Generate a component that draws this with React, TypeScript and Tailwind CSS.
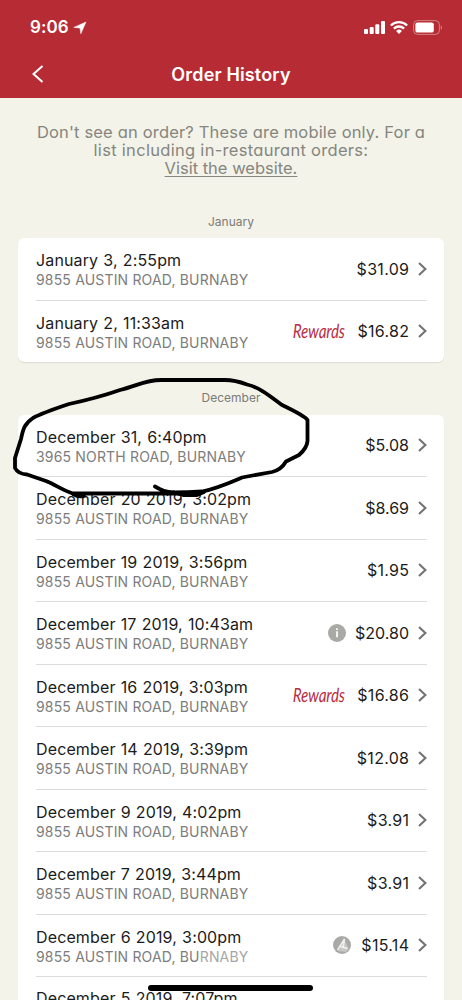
import type { ReactNode } from "react";
import clsx from "clsx";

interface Order {
  date: string;
  address: ReactNode;
  price: string;
  badge?: "rewards" | "info" | "faded";
}

const AUSTIN = "9855 AUSTIN ROAD, BURNABY";

const january: Order[] = [
  { date: "January 3, 2:55pm", address: AUSTIN, price: "$31.09" },
  {
    date: "January 2, 11:33am",
    address: AUSTIN,
    price: "$16.82",
    badge: "rewards",
  },
];

const december: Order[] = [
  {
    date: "December 31, 6:40pm",
    address: "3965 NORTH ROAD, BURNABY",
    price: "$5.08",
  },
  { date: "December 20 2019, 3:02pm", address: AUSTIN, price: "$8.69" },
  { date: "December 19 2019, 3:56pm", address: AUSTIN, price: "$1.95" },
  {
    date: "December 17 2019, 10:43am",
    address: AUSTIN,
    price: "$20.80",
    badge: "info",
  },
  {
    date: "December 16 2019, 3:03pm",
    address: AUSTIN,
    price: "$16.86",
    badge: "rewards",
  },
  { date: "December 14 2019, 3:39pm", address: AUSTIN, price: "$12.08" },
  { date: "December 9 2019, 4:02pm", address: AUSTIN, price: "$3.91" },
  { date: "December 7 2019, 3:44pm", address: AUSTIN, price: "$3.91" },
  {
    date: "December 6 2019, 3:00pm",
    address: (
      <>
        9855 AUSTIN ROAD, BU<span className="text-[#a6a6a6]">RNABY</span>
      </>
    ),
    price: "$15.14",
    badge: "faded",
  },
];

const StatusBar = () => (
  <div className="flex h-[55px] items-end justify-between pr-[19px] pl-[30px]">
    <div className="flex items-center gap-1">
      <span className="text-[17px] leading-[55px] font-semibold tracking-[0.1px]">
        9:06
      </span>
      <svg width="14" height="14" viewBox="0 0 14 14" fill="currentColor">
        <path
          d="M13 1 7.800 12.800 7 7 .8 6.400Z"
          stroke="currentColor"
          strokeWidth=".5"
        />
      </svg>
    </div>
    <div className="flex h-[55px] items-center gap-[5px]">
      <svg width="21" height="13" viewBox="0 0 21 13" fill="currentColor">
        <rect x="0" y="8" width="4" height="5" rx="1" />
        <rect x="5.7" y="6" width="4" height="7" rx="1" />
        <rect x="11.3" y="3.2" width="4" height="9.8" rx="1" />
        <rect x="17" y="0" width="4" height="13" rx="1" />
      </svg>
      <svg width="18" height="13" viewBox="0 0 18 13" fill="none">
        <path
          d="M.9 4.5a11.6 11.6 0 0 1 16.2 0M3.9 7.6a7.3 7.3 0 0 1 10.2 0"
          stroke="currentColor"
          strokeWidth="2.3"
        />
        <path
          d="M6.1 9.9a4.2 4.2 0 0 1 5.8 0L9 12.9Z"
          fill="currentColor"
        />
      </svg>
      <svg width="30" height="15" viewBox="0 0 30 15">
        <rect
          x=".6"
          y=".6"
          width="25.8"
          height="13.8"
          rx="4"
          fill="none"
          stroke="#fff"
          strokeOpacity=".4"
        />
        <rect x="2.4" y="2.4" width="18.4" height="10.2" rx="2.2" fill="#fff" />
        <path d="M27.8 5.2q2.2 2.3 0 4.6Z" fill="#fff" fillOpacity=".5" />
      </svg>
    </div>
  </div>
);

const InfoBadge = ({ faded }: { faded: boolean }) => (
  <svg width="18" height="18" viewBox="0 0 18 18">
    <circle cx="9" cy="9" r="9" fill="#a9a9a5" />
    {faded ? (
      <>
        <path d="M5 15 11 2.5 15.5 13 13 16Z" fill="#c6c6c3" />
        <path
          d="M4.5 14 11.5 3 10 12.5M7.5 10.5l7 2"
          fill="none"
          stroke="#f2f2f0"
          strokeWidth="1.4"
        />
      </>
    ) : (
      <path
        d="M9 4.3v1.7M9 7.3v6"
        fill="none"
        stroke="#fff"
        strokeWidth="1.7"
      />
    )}
  </svg>
);

const OrderRow = ({ order, last }: { order: Order; last: boolean }) => (
  <li
    className={clsx(
      "flex items-center justify-between",
      last ? "h-[61px]" : "h-[62.5px] border-b border-[#dcdcdc]"
    )}
  >
    <div className="pt-[3px] whitespace-nowrap">
      <p className="text-[16px] leading-5 tracking-[0.13px] text-[#1b1b1b] [word-spacing:0.5px]">
        {order.date}
      </p>
      <p className="text-[14px] leading-5 tracking-[0.17px] text-[#7d7d7d]">
        {order.address}
      </p>
    </div>
    <div className="flex items-center">
      {order.badge === "rewards" && (
        <span className="mr-[8px] inline-block w-[56px] origin-left scale-x-[0.76] -skew-x-2 font-['Lato'] text-[19.5px] leading-5 text-[#b92b42] italic">
          Rewards
        </span>
      )}
      {(order.badge === "info" || order.badge === "faded") && (
        <span
          className={order.badge === "faded" ? "mr-[10px] -ml-1" : "mr-[9px]"}
        >
          <InfoBadge faded={order.badge === "faded"} />
        </span>
      )}
      <span
        className={clsx(
          "text-[16px] text-[#1b1b1b]",
          order.price.includes("1") && "-mr-[0.3px] tracking-[0.3px]"
        )}
      >
        {order.price}
      </span>
      <svg
        className="ml-[9px]"
        width="9"
        height="14"
        viewBox="0 0 9 14"
        fill="none"
        stroke="#737373"
        strokeWidth="2.1"
      >
        <path d="m1 1 6.4 6L1 13" />
      </svg>
    </div>
  </li>
);

const OrderList = ({
  orders,
  children,
}: {
  orders: Order[];
  children?: ReactNode;
}) => (
  <ul className="mx-[18px] rounded-md bg-white pr-[17px] pl-[18px] shadow-[0_1px_1px_rgba(0,0,0,0.1)]">
    {orders.map((order, i) => (
      <OrderRow
        key={order.date}
        order={order}
        last={!children && i === orders.length - 1}
      />
    ))}
    {children}
  </ul>
);

const App = () => {
  return (
    <div className="relative h-[1000px] w-[462px] overflow-hidden bg-[#f3f3e9] font-['Inter',sans-serif]">
      <header className="h-[98px] bg-[#b72c34] text-white">
        <StatusBar />
        <div className="grid h-[38px] grid-cols-[1fr_auto_1fr] items-center">
          <svg
            className="ml-8"
            width="12"
            height="18"
            viewBox="0 0 12 18"
            fill="none"
            stroke="currentColor"
            strokeWidth="2"
          >
            <path d="M10.5 1 1.5 9l9 8" />
          </svg>
          <h1 className="text-[18px] font-semibold tracking-[0.15px]">
            Order History
          </h1>
        </div>
      </header>

      <p className="mt-[25px] h-[54px] text-center text-[16.5px] leading-[18px] whitespace-nowrap text-[#85867f] [font-feature-settings:'cv11']">
        <span className="tracking-[0.17px]">
          Don't see an order? These are mobile only. For a
        </span>
        <br />
        <span className="tracking-[0.3px]">
          list including in-restaurant orders:
        </span>
        <br />
        <a className="underline underline-offset-2">Visit the website.</a>
      </p>

      <h2 className="mt-[36px] mb-[7px] text-center text-[12px] leading-[18px] text-[#7b7b77]">
        January
      </h2>
      <OrderList orders={january} />
      <h2 className="mt-[27px] mb-[8px] text-center text-[12px] leading-[18px] text-[#7b7b77]">
        December
      </h2>
      <OrderList orders={december}>
        <li className="h-[62px] pt-[11px] text-[16px] leading-[21px] tracking-[0.13px] text-[#1b1b1b] [word-spacing:0.5px]">
          December 5 2019, 7:07pm
        </li>
      </OrderList>

      {/* hand drawn loop around the first December order */}
      <svg
        className="pointer-events-none absolute top-[370px] left-0"
        width="330"
        height="135"
        viewBox="0 0 330 135"
        fill="none"
        stroke="#000"
        strokeWidth="3.8"
        strokeLinecap="round"
        strokeLinejoin="round"
      >
        <path d="M155 116.5C162 120.500 165 122 174 122.5Q188 122.5 202 121.5C217 118.5 229 113 242 107.5L272 102Q281 100 286 91.5L299 85Q307 78 307.5 71V50Q305 46 282 35C270 26 259 17 247 14.5Q235 10 225 10H161C145 10 137 16 120 20C100 27 83 31 69 34C54 39 40 44 33 48C24 54 23 60 21 69L15 88V98Q18 104 27 104.5L46 111C56 115 64 121 73 123.5H200" />
        <path d="M73 124Q78 127 84 126M174 122.5l9 2.500h14l7-3" />
      </svg>

      <div className="absolute bottom-[9px] left-[148px] h-[6px] w-[165px] rounded-full bg-black" />
    </div>
  );
};

export default App;
